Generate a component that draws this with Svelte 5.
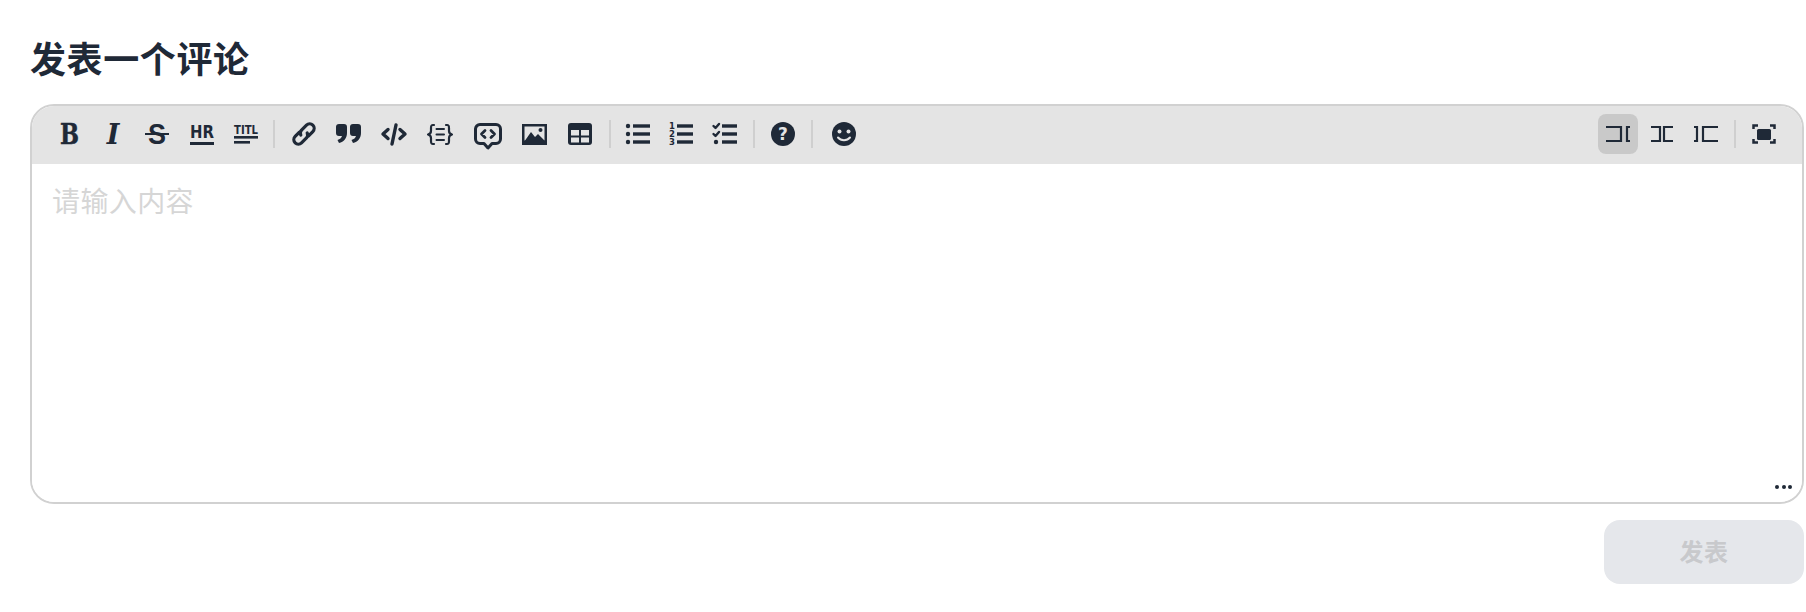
<script>
	const title = "发表一个评论";
</script>

<section class="comment">
	<h2 class="title">{title}</h2>

	<div class="editor">
		<div class="toolbar">
			<div class="tools">
				<button class="tool"><svg viewBox="0 0 28 28"><text x="5" y="24" class="t-serif heavy" font-size="28" textLength="19" lengthAdjust="spacingAndGlyphs">B</text></svg></button>
				<button class="tool"><svg viewBox="0 0 28 28"><text x="14" y="24" text-anchor="middle" class="t-serif it" font-size="27">I</text></svg></button>
				<button class="tool">
					<svg viewBox="0 0 28 28">
						<text x="5" y="24" class="t-round" font-size="29" textLength="18" lengthAdjust="spacingAndGlyphs">S</text>
						<rect x="2" y="13" width="24" height="2" class="ink" />
					</svg>
				</button>
				<button class="tool">
					<svg viewBox="0 0 28 28">
						<text x="3" y="18" class="t-sans" font-size="18" textLength="24" lengthAdjust="spacingAndGlyphs">HR</text>
						<rect x="3" y="22" width="24" height="3" class="ink" />
					</svg>
				</button>
				<button class="tool">
					<svg viewBox="0 0 28 28">
						<text x="3" y="14" class="t-sans" font-size="12" textLength="24" lengthAdjust="spacingAndGlyphs">TITL</text>
						<rect x="3" y="16" width="24" height="2.600" class="ink" />
						<rect x="3" y="21" width="16" height="2.600" class="ink" />
					</svg>
				</button>
				<span class="sep"></span>

				<button class="tool wide">
					<svg viewBox="0 0 28 28">
						<g class="line" stroke-width="3.200" transform="rotate(-45 14 14)">
							<path d="M12 9.500H6a4.500 4.500 0 0 0 0 9h7a4.500 4.500 0 0 0 4-3" />
							<path d="M16 18.500h6a4.500 4.500 0 0 0 0-9h-7a4.500 4.500 0 0 0-4 3" />
						</g>
					</svg>
				</button>
				<button class="tool wide shift">
					<svg viewBox="0 0 28 28">
						<path class="ink" d="M5 4h5a3 3 0 0 1 3 3v6c0 5-3 9-8 10l-1.500-3c2.500-1 4-2 4.500-4H5a3 3 0 0 1-3-3V7a3 3 0 0 1 3-3z" />
						<path class="ink" d="M19 4h5a3 3 0 0 1 3 3v6c0 5-3 9-8 10l-1.500-3c2.500-1 4-2 4.500-4h-3a3 3 0 0 1-3-3V7a3 3 0 0 1 3-3z" />
					</svg>
				</button>
				<button class="tool wide">
					<svg viewBox="0 0 28 28">
						<path class="line" stroke-width="3.400" d="M8 9.500L3 14l5 4.500M20 9.500l5 4.500-5 4.500M16 5l-4 19" />
					</svg>
				</button>
				<button class="tool wide">
					<svg viewBox="0 0 28 28">
						<path class="line" stroke-width="2.200" d="M8 5H7C5 5 5 6 5 8v3c0 2-1 3-3 3.500 2 .5 3 1.500 3 3.500v3c0 2 0 3 2 3h1M20 5h1c2 0 2 1 2 3v3c0 2 1 3 3 3.500-2 .5-3 1.500-3 3.500v3c0 2 0 3-2 3h-1" />
						<path class="line" stroke-width="2" d="M10.500 9H18M10.500 14.500H18M10.500 20H18" />
					</svg>
				</button>
				<button class="tool wide unshift">
					<svg viewBox="0 0 28 28">
						<path class="line" stroke-width="3" d="M6 4.500h16a4.500 4.500 0 0 1 4.500 4.500v10a4.500 4.500 0 0 1-4.500 4.500h-4L14 28l-4-4.500H6A4.500 4.500 0 0 1 1.500 19V9A4.500 4.500 0 0 1 6 4.500z" />
						<path class="line" stroke-width="2.800" d="M11 10.500L7.500 14l3.500 3.500M17 10.500l3.500 3.500-3.500 3.500" />
					</svg>
				</button>
				<button class="tool wide">
					<svg viewBox="0 0 28 28">
						<rect x="2" y="4" width="25" height="21" class="ink" />
						<rect x="4.500" y="6.500" width="20" height="14" fill="#e4e4e4" />
						<path class="ink" d="M4 22l7-10 4 5 3-3 7 7v1z" />
						<circle cx="20.500" cy="10" r="2" class="ink" />
					</svg>
				</button>
				<button class="tool wide">
					<svg viewBox="0 0 28 28">
						<rect x="2" y="3" width="24" height="22" rx="3" class="ink" />
						<rect x="5" y="10" width="8" height="5.500" fill="#e4e4e4" />
						<rect x="15" y="10" width="8" height="5.500" fill="#e4e4e4" />
						<rect x="5" y="17.500" width="8" height="5" fill="#e4e4e4" />
						<rect x="15" y="17.500" width="8" height="5" fill="#e4e4e4" />
					</svg>
				</button>
				<span class="sep"></span>

				<button class="tool shift">
					<svg viewBox="0 0 28 28">
						<circle cx="5" cy="6" r="2.200" class="ink" />
						<circle cx="5" cy="14" r="2.200" class="ink" />
						<circle cx="5" cy="22" r="2.200" class="ink" />
						<rect x="10" y="4.300" width="17" height="3.400" class="ink" />
						<rect x="10" y="12.300" width="17" height="3.400" class="ink" />
						<rect x="10" y="20.300" width="17" height="3.400" class="ink" />
					</svg>
				</button>
				<button class="tool">
					<svg viewBox="0 0 28 28">
						<text x="5" y="9" text-anchor="middle" class="t-sans" font-size="8.500">1</text>
						<text x="5" y="17" text-anchor="middle" class="t-sans" font-size="8.500">2</text>
						<text x="5" y="25" text-anchor="middle" class="t-sans" font-size="8.500">3</text>
						<rect x="10" y="4.300" width="16" height="3.400" class="ink" />
						<rect x="10" y="12.300" width="16" height="3.400" class="ink" />
						<rect x="10" y="20.300" width="16" height="3.400" class="ink" />
					</svg>
				</button>
				<button class="tool">
					<svg viewBox="0 0 28 28">
						<path class="line" stroke-width="2.400" d="M2.500 6l2 2 3.500-4M2.500 14l2 2 3.500-4" />
						<circle cx="5" cy="22" r="2.200" class="ink" />
						<rect x="11" y="4.300" width="15" height="3.400" class="ink" />
						<rect x="11" y="12.300" width="15" height="3.400" class="ink" />
						<rect x="11" y="20.300" width="15" height="3.400" class="ink" />
					</svg>
				</button>
				<span class="sep"></span>

				<button class="tool">
					<svg viewBox="0 0 28 28">
						<circle cx="14" cy="14" r="12" class="ink" />
						<text x="14" y="20" text-anchor="middle" class="t-sans on-ink" font-size="17">?</text>
					</svg>
				</button>
				<span class="sep"></span>

				<button class="tool emoji">
					<svg viewBox="0 0 28 28">
						<circle cx="14" cy="14" r="12" class="ink" />
						<circle cx="9.500" cy="11.500" r="2" fill="#e4e4e4" />
						<circle cx="18.500" cy="11.500" r="2" fill="#e4e4e4" />
						<path d="M8 17.500c3 3.500 9 3.500 12 0" fill="none" stroke="#e4e4e4" stroke-width="2" stroke-linecap="round" />
					</svg>
				</button>
			</div>

			<div class="tools">
				<button class="tool active">
					<svg viewBox="0 0 28 28"><path class="line square" stroke-width="2.200" d="M2 7h15v14H2M26 7h-3v14h3" /></svg>
				</button>
				<button class="tool">
					<svg viewBox="0 0 28 28"><path class="line square" stroke-width="2.200" d="M3 7h9v14H3M25 7h-9v14h9" /></svg>
				</button>
				<button class="tool">
					<svg viewBox="0 0 28 28"><path class="line square" stroke-width="2.200" d="M2 7h3v14H2M26 7H11v14h15" /></svg>
				</button>
				<span class="sep"></span>
				<button class="tool">
					<svg viewBox="0 0 28 28">
						<path class="line square" stroke-width="2.500" d="M3.500 9V5.500H8M20 5.500h4.500V9M24.500 19v3.500H20M8 22.500H3.500V19" />
						<rect x="7" y="9" width="14" height="11" rx="1.500" class="ink" />
					</svg>
				</button>
			</div>
		</div>

		<div class="body">
			<textarea class="input" placeholder="请输入内容"></textarea>
			<span class="more"><i></i><i></i><i></i></span>
		</div>
	</div>

	<div class="actions">
		<button class="submit" disabled>发表</button>
	</div>
</section>

<style>
	:global(body) {
		background: #fff;
	}

	.comment {
		padding: 37px 2px 0 30px;
		font-family: "Noto Sans CJK SC", "Noto Sans", sans-serif;
		color: #1f2937;
	}

	.title {
		margin: 0 0 27px;
		font-size: 36px;
		line-height: 40px;
		font-weight: 700;
		letter-spacing: 0.6px;
	}

	.editor {
		height: 400px;
		display: flex;
		flex-direction: column;
		border: 2px solid #d1d1d1;
		border-radius: 24px;
		overflow: hidden;
		box-sizing: border-box;
	}

	.toolbar {
		display: flex;
		justify-content: space-between;
		align-items: center;
		padding: 8px 18px 10px 17px;
		background: #e4e4e4;
	}

	.tools {
		display: flex;
		align-items: center;
		gap: 4px;
	}

	.tool {
		width: 40px;
		height: 40px;
		padding: 0;
		display: flex;
		align-items: center;
		justify-content: center;
		background: none;
		border: 0;
		border-radius: 8px;
	}

	.tool.wide {
		width: 42px;
	}

	/* nudges: the source toolbar doesn't have an even pitch */
	.tool.shift {
		margin-left: -2px;
	}

	.tool.unshift {
		margin-left: 2px;
	}

	.tool.emoji {
		width: 46px;
	}

	.tool.active {
		background: #c9c9c9;
	}

	.tool svg {
		width: 28px;
		height: 28px;
		overflow: visible;
	}

	.ink {
		fill: #1f2937;
	}

	.line {
		fill: none;
		stroke: #1f2937;
		stroke-linecap: round;
		stroke-linejoin: round;
	}

	.line.square {
		stroke-linecap: butt;
		stroke-linejoin: miter;
	}

	.t-serif {
		font-family: "DejaVu Serif", serif;
		font-weight: 700;
		fill: #1f2937;
	}

	.t-serif.it {
		font-style: italic;
	}

	.t-serif.heavy {
		stroke: #1f2937;
		stroke-width: 0.5px;
	}

	.t-sans {
		font-family: "DejaVu Sans", sans-serif;
		font-weight: 700;
		fill: #1f2937;
	}

	.t-sans.on-ink {
		fill: #e4e4e4;
	}

	.t-round {
		font-family: "Liberation Sans", sans-serif;
		font-weight: 700;
		fill: #1f2937;
	}

	.sep {
		width: 2px;
		height: 28px;
		margin: 0 4px;
		background: #cfcfcf;
	}

	.body {
		position: relative;
		flex: 1;
	}

	.input {
		display: block;
		width: 100%;
		height: 100%;
		box-sizing: border-box;
		padding: 16px 20px;
		border: 0;
		outline: 0;
		resize: none;
		font: 28px/40px "Noto Sans CJK SC", sans-serif;
		letter-spacing: 0.4px;
	}

	.input::placeholder {
		color: #d6d6d6;
		opacity: 1;
	}

	.more {
		position: absolute;
		right: 10px;
		bottom: 13px;
		display: flex;
		gap: 2.500px;
	}

	.more i {
		width: 4px;
		height: 4px;
		border-radius: 50%;
		background: #1f2937;
	}

	.actions {
		display: flex;
		justify-content: flex-end;
		margin-top: 16px;
	}

	.submit {
		width: 200px;
		height: 64px;
		padding: 0 0 4px;
		border: 0;
		border-radius: 16px;
		background: #e5e7eb;
		color: #c8c9cc;
		font: 700 24px "Noto Sans CJK SC", sans-serif;
		letter-spacing: 0.4px;
	}
</style>
